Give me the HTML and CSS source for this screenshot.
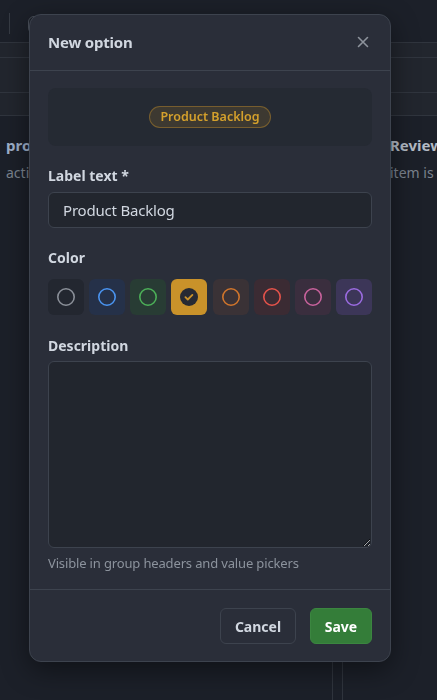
FILE: index.html
```html
<!DOCTYPE html>
<html lang="en">
<head>
<meta charset="utf-8">
<title>New option</title>
<link rel="stylesheet" href="styles.css">
</head>
<body>
<div class="page">
  <header class="toolbar">
    <span class="tb-sep"></span>
    <span class="tb-btn"></span>
  </header>
  <div class="row row-1"></div>
  <div class="row row-2"></div>
  <div class="row row-3"></div>
  <div class="board">
    <section class="col col-a">
      <div class="col-title">pro</div>
      <div class="col-sub">acti</div>
    </section>
    <section class="col col-b">
      <div class="col-title">Review</div>
      <div class="col-sub">item is</div>
    </section>
  </div>
</div>

<div class="overlay">
  <div class="dialog" role="dialog" aria-label="New option">
    <div class="dlg-head">
      <h2 class="dlg-title">New option</h2>
      <button class="close" aria-label="Close">
        <svg width="16" height="16" viewBox="0 0 16 16"><path d="M3.5 3.5l9 9M12.5 3.5l-9 9" stroke="currentColor" stroke-width="1.6" stroke-linecap="round" fill="none"/></svg>
      </button>
    </div>
    <div class="dlg-body">
      <div class="preview"><span class="pill">Product Backlog</span></div>

      <label class="field-label lbl-text">Label text *</label>
      <input class="input" type="text" value="Product Backlog">

      <div class="field-label lbl-color">Color</div>
      <div class="swatches">
        <span class="sw sw-gray"><svg viewBox="0 0 20 20"><circle cx="10" cy="10" r="8.2"/></svg></span>
        <span class="sw sw-blue"><svg viewBox="0 0 20 20"><circle cx="10" cy="10" r="8.2"/></svg></span>
        <span class="sw sw-green"><svg viewBox="0 0 20 20"><circle cx="10" cy="10" r="8.2"/></svg></span>
        <span class="sw sw-yellow sel"><svg viewBox="0 0 20 20"><circle class="fill" cx="10" cy="10" r="9"/><path class="chk" d="M6.4 10.2l2.4 2.3 4.6-4.6"/></svg></span>
        <span class="sw sw-orange"><svg viewBox="0 0 20 20"><circle cx="10" cy="10" r="8.2"/></svg></span>
        <span class="sw sw-red"><svg viewBox="0 0 20 20"><circle cx="10" cy="10" r="8.2"/></svg></span>
        <span class="sw sw-pink"><svg viewBox="0 0 20 20"><circle cx="10" cy="10" r="8.2"/></svg></span>
        <span class="sw sw-purple"><svg viewBox="0 0 20 20"><circle cx="10" cy="10" r="8.2"/></svg></span>
      </div>

      <label class="field-label lbl-desc">Description</label>
      <textarea class="textarea"></textarea>
      <div class="help">Visible in group headers and value pickers</div>
    </div>
    <div class="dlg-foot">
      <button class="btn btn-cancel">Cancel</button>
      <button class="btn btn-save">Save</button>
    </div>
  </div>
</div>
</body>
</html>
```

FILE: styles.css
```css
* { box-sizing: border-box; }
html, body { margin: 0; padding: 0; }
body {
  width: 437px;
  height: 700px;
  overflow: hidden;
  background: #1c2029;
  font-family: "Noto Sans", "Liberation Sans", sans-serif;
  color: #d1d7e0;
}

/* background board */
.page { height: 700px; display: flex; flex-direction: column; }
.toolbar {
  height: 43px;
  border-bottom: 1px solid #30353e;
  display: flex;
  align-items: flex-start;
  padding: 13px 0 0 9px;
  gap: 18px;
}
.tb-sep { width: 1px; height: 21px; background: #363b44; }
.tb-btn { width: 40px; height: 18px; margin-top: 3px; border: 1px solid #4a505a; border-radius: 6px; }
.row { background: #22262e; border-bottom: 1px solid #30353e; }
.row-1 { height: 15px; }
.row-2 { height: 35px; }
.row-3 { height: 23px; }
.board { flex: 1; display: flex; gap: 9px; }
.col { height: 100%; }
.col-a { flex: 0 0 333px; border-right: 1px solid #30353e; padding: 19px 0 0 6px; }
.col-b { flex: 1 1 0; min-width: 0; overflow: hidden; white-space: nowrap; border-left: 1px solid #30353e; padding: 19px 0 0 47px; }
.col-title { font-size: 15px; line-height: 20px; font-weight: 700; color: #9fb1cb; }
.col-b .col-title { color: #b3bac4; }
.col-sub { margin-top: 8px; font-size: 14px; line-height: 20px; color: #7b838e; }

/* dialog */
.overlay { position: fixed; inset: 0; }
.dialog {
  position: absolute;
  top: 14px;
  left: 29px;
  width: 362px;
  background: #2a2e39;
  border: 1px solid #3d434e;
  border-radius: 12px;
  box-shadow: 0 8px 28px rgba(0, 0, 0, 0.45);
  display: flex;
  flex-direction: column;
}
.dlg-head {
  height: 56px;
  padding: 0 18px 1px;
  border-bottom: 1px solid #3d434e;
  display: flex;
  align-items: center;
  justify-content: space-between;
}
.dlg-title { margin: 0; font-size: 15px; letter-spacing: -0.2px; font-weight: 700; color: #d1d7e0; line-height: 20px; }
.close {
  width: 16px; height: 16px; padding: 0; border: 0; background: none;
  color: #8d939c; display: flex; margin-right: 1px;
}
.dlg-body { padding: 17px 18px 17px; display: flex; flex-direction: column; }
.preview {
  height: 58px;
  background: #252a33;
  border-radius: 8px;
  display: flex;
  align-items: center;
  justify-content: center;
}
.pill {
  height: 22px;
  padding: 0 10px;
  border: 1px solid rgba(201, 146, 42, 0.42);
  background: rgba(201, 146, 42, 0.15);
  border-radius: 11px;
  color: #d4a02c;
  font-size: 12.5px;
  font-weight: 600;
  line-height: 20px;
}
.field-label { display: block; font-size: 14px; line-height: 20px; font-weight: 700; color: #d1d7e0; }
.lbl-text { margin-top: 20px; }
.lbl-color { margin-top: 20px; }
.lbl-desc { margin-top: 21px; }
.input {
  margin-top: 6px;
  height: 36px;
  width: 100%;
  background: #22262e;
  border: 1px solid #3d434e;
  border-radius: 6px;
  padding: 0 14px;
  font-family: inherit;
  font-size: 15px;
  letter-spacing: -0.2px;
  color: #d1d7e0;
  outline: none;
}
.swatches { margin-top: 11px; display: flex; justify-content: space-between; }
.sw {
  width: 36px; height: 36px; border-radius: 6px;
  display: flex; align-items: center; justify-content: center;
}
.sw svg { width: 20px; height: 20px; }
.sw circle { fill: none; stroke-width: 1.6; }
.sw-gray { background: #232730; }
.sw-gray circle { stroke: #8a8f98; }
.sw-blue { background: #253149; }
.sw-blue circle { stroke: #4a94f0; }
.sw-green { background: #283c34; }
.sw-green circle { stroke: #4caf58; }
.sw-yellow { background: #c9922a; }
.sw-yellow circle.fill { fill: #262a33; stroke: none; }
.sw-yellow .chk { fill: none; stroke: #c9922a; stroke-width: 1.8; stroke-linecap: round; stroke-linejoin: round; }
.sw-orange { background: #3a3236; }
.sw-orange circle { stroke: #d0752c; }
.sw-red { background: #3b2b33; }
.sw-red circle { stroke: #e5534b; }
.sw-pink { background: #3a2e3e; }
.sw-pink circle { stroke: #c8629c; }
.sw-purple { background: #3c3658; }
.sw-purple circle { stroke: #9a6be0; }
.textarea {
  margin-top: 5px;
  height: 187px;
  width: 100%;
  background: #22262e;
  border: 1px solid #3d434e;
  border-radius: 6px;
  resize: vertical;
  font-family: inherit;
  font-size: 14px;
  color: #d1d7e0;
  outline: none;
  color-scheme: dark;
}
.help { margin-top: 6px; font-size: 13px; letter-spacing: -0.15px; line-height: 18px; color: #8c939d; }
.dlg-foot {
  border-top: 1px solid #3d434e;
  padding: 18px 18px 17px;
  display: flex;
  justify-content: flex-end;
  gap: 14px;
}
.btn {
  height: 36px;
  border-radius: 6px;
  font-family: inherit;
  font-size: 14px;
  font-weight: 700;
  padding: 0;
}
.btn-cancel { width: 76px; background: #2a2e39; border: 1px solid #3d434e; color: #d1d7e0; }
.btn-save { width: 62px; background: #347d39; border: 1px solid #3b8640; color: #ffffff; }
```
